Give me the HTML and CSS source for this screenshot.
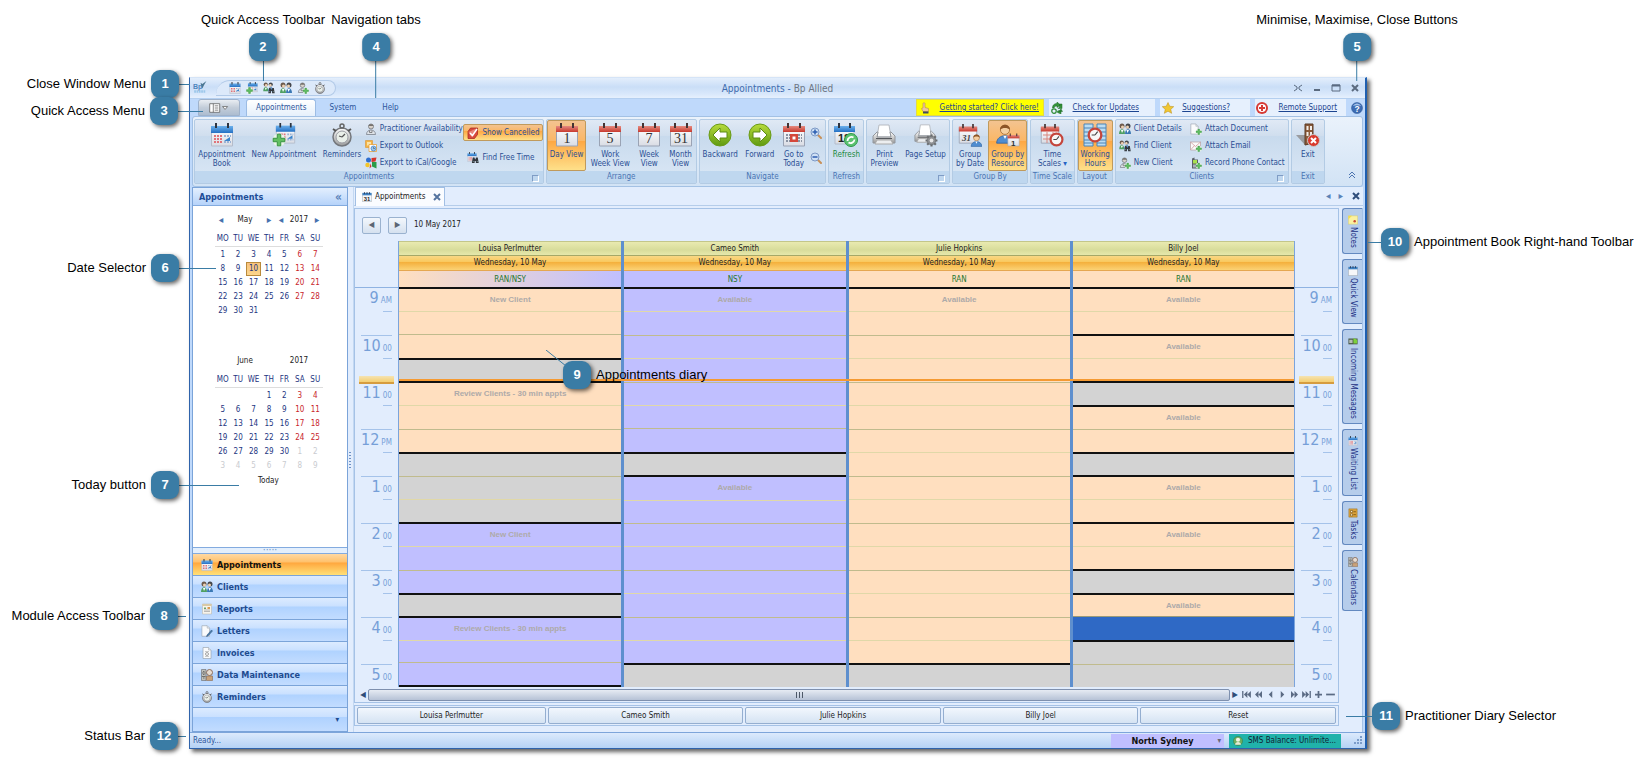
FILE: index.html
```html
<!DOCTYPE html>
<html lang="en">
<head>
<meta charset="utf-8">
<meta name="viewport" content="width=device-width, initial-scale=1.0">
<title>Appointments - Bp Allied</title>
<link rel="stylesheet" href="styles.css">
</head>
<body>

<!-- ICONS -->
<svg class="defs" aria-hidden="true">
<defs>
<linearGradient id="gGreen" x1="0" y1="0" x2="0" y2="1"><stop offset="0" stop-color="#b8dc3c"/><stop offset="1" stop-color="#5f9a10"/></linearGradient>
<linearGradient id="gGrey" x1="0" y1="0" x2="0" y2="1"><stop offset="0" stop-color="#ffffff"/><stop offset="1" stop-color="#9a9a9a"/></linearGradient>
<linearGradient id="gPage" x1="0" y1="0" x2="0" y2="1"><stop offset="0" stop-color="#ffffff"/><stop offset="1" stop-color="#d9dce4"/></linearGradient>
<linearGradient id="gRed" x1="0" y1="0" x2="0" y2="1"><stop offset="0" stop-color="#e58a80"/><stop offset="1" stop-color="#c8392e"/></linearGradient>
<linearGradient id="gBlue" x1="0" y1="0" x2="0" y2="1"><stop offset="0" stop-color="#6db1ec"/><stop offset="1" stop-color="#2470c4"/></linearGradient>
</defs>
<symbol id="plus" viewBox="0 0 24 24"><circle cx="12" cy="12" r="11" fill="#eaf6ea"/><path d="M9 2h6v7h7v6h-7v7H9v-7H2V9h7z" fill="#62c062" stroke="#2d8a3a" stroke-width="1.500"/></symbol>
<symbol id="cal" viewBox="0 0 24 24"><path d="M1.500 4h21v19h-21z" fill="url(#gPage)" stroke="#b4bccb"/><path d="M1 3h22v7H1z" fill="url(#gBlue)"/><path d="M6 0v5M18 0v5" stroke="#2d3440" stroke-width="2"/><path d="M4 13h8M4 16h8M4 19h8" stroke="#e0737a" stroke-width="2" stroke-dasharray="2 1"/><path d="M14 13h7M14 19h7" stroke="#9ab3d5" stroke-width="2" stroke-dasharray="2 1"/><path d="M14 18l6-4v4z" fill="#3a84cc"/></symbol>
<symbol id="calplus" viewBox="0 0 24 24"><use href="#cal" x="3" width="21" height="21"/><use href="#plus" y="10" width="14" height="14"/></symbol>
<symbol id="watch" viewBox="0 0 24 24"><circle cx="12" cy="14" r="9" fill="url(#gGrey)" stroke="#74777c" stroke-width="1.500"/><circle cx="12" cy="14" r="6" fill="#e9efe9" stroke="#9a9da3"/><path d="M12 14l3-3M12 14l-3-1" stroke="#555" stroke-width="1.200"/><circle cx="12" cy="3" r="2" fill="none" stroke="#666" stroke-width="1.500"/><path d="M3 6l3 2M21 6l-3 2" stroke="#555" stroke-width="2"/></symbol>
<symbol id="person" viewBox="0 0 24 24"><circle cx="12" cy="7" r="5" fill="#d8d2cb" stroke="#6b6f76" stroke-width="1.500"/><path d="M7 6c1-5 9-5 10 0" fill="#77736f"/><path d="M3 23c0-12 18-12 18 0z" fill="#dfe3e8" stroke="#747b85" stroke-width="1.500"/><path d="M9 15v4h5v-4" fill="none" stroke="#666" stroke-width="1.500"/></symbol>
<symbol id="outlook" viewBox="0 0 24 24"><path d="M1 1h14v14H1z" fill="#f4b443" stroke="#d8891c"/><path d="M4 4h8v7H4z" fill="#fbe3a5"/><path d="M8 9h15v14H8z" fill="#fff" stroke="#e69b2d" stroke-width="1.500"/><circle cx="17" cy="17" r="5" fill="#9cc6ee" stroke="#3d7fc2" stroke-width="1.500"/><path d="M17 14v3h3" fill="none" stroke="#245"/></symbol>
<symbol id="google" viewBox="0 0 24 24"><circle cx="7" cy="6" r="5" fill="#2e6fd0"/><circle cx="5" cy="16" r="4.500" fill="#f3c52b"/><path d="M13 2l10-1-2 8-8 1z" fill="#d5332b"/><path d="M14 10h9v13l-9-4z" fill="#2a9b48"/><path d="M11 13l-2 10 4-4z" fill="#d5332b"/></symbol>
<symbol id="cancel" viewBox="0 0 24 24"><path d="M7 2h14v13l-6 8H2V9z" fill="#d84a3c" stroke="#a82a20" stroke-width="1.500"/><path d="M3 10l16-7-10 17z" fill="#e9877c"/><path d="M6 12l5 5L20 4" stroke="#fff" stroke-width="3" fill="none"/></symbol>
<symbol id="binoc" viewBox="0 0 24 24"><path d="M4 3h5l2 6h2l2-6h5l3 18h-9v-7h-4v7H1z" fill="#33373d"/><path d="M4 16h3M17 16h3" stroke="#9cc" stroke-width="2"/></symbol>
<symbol id="calfind" viewBox="0 0 24 24"><use href="#cal" width="20" height="20"/><use href="#binoc" x="9" y="9" width="15" height="15"/></symbol>
<symbol id="calred" viewBox="0 0 24 24"><path d="M1.500 4h21v19h-21z" fill="url(#gPage)" stroke="#9aa3b4"/><path d="M1 3h22v6H1z" fill="url(#gRed)"/><path d="M6 0v5M18 0v5" stroke="#433" stroke-width="2"/></symbol>
<symbol id="caldots" viewBox="0 0 24 24"><use href="#calred" width="24" height="24"/><path d="M4 12h16M4 15h16M4 18h16" stroke="#8a93a3" stroke-width="2" stroke-dasharray="2 1"/><path d="M8 11h8v8H8z" fill="#d4473b"/><path d="M10.500 13.500h3v3h-3z" fill="#fff"/></symbol>
<symbol id="back" viewBox="0 0 24 24"><circle cx="12" cy="12" r="11" fill="url(#gGreen)" stroke="#6a9a18"/><path d="M12 5v4h7v6h-7v4l-7-7z" fill="#fff" stroke="#5d8c14"/></symbol>
<symbol id="fwd" viewBox="0 0 24 24"><circle cx="12" cy="12" r="11" fill="url(#gGreen)" stroke="#6a9a18"/><path d="M12 5v4H5v6h7v4l7-7z" fill="#fff" stroke="#5d8c14"/></symbol>
<symbol id="zin" viewBox="0 0 24 24"><path d="M15 15l7 7" stroke="#c89058" stroke-width="4" stroke-linecap="round"/><circle cx="10" cy="10" r="8" fill="#cfe0f4" stroke="#7d99c6" stroke-width="2"/><path d="M10 5v10M5 10h10" stroke="#2c5db0" stroke-width="3"/></symbol>
<symbol id="zout" viewBox="0 0 24 24"><path d="M15 15l7 7" stroke="#c89058" stroke-width="4" stroke-linecap="round"/><circle cx="10" cy="10" r="8" fill="#cfe0f4" stroke="#7d99c6" stroke-width="2"/><path d="M5 10h10" stroke="#2c5db0" stroke-width="3"/></symbol>
<symbol id="refresh" viewBox="0 0 24 24"><path d="M1 4h19v17H1z" fill="url(#gPage)" stroke="#b4bccb"/><path d="M0 3h21v6H0z" fill="url(#gBlue)"/><path d="M5 0v5M16 0v5" stroke="#2d3440" stroke-width="2"/></symbol>
<symbol id="cycle" viewBox="0 0 24 24"><circle cx="17" cy="17" r="6.500" fill="#5cc271" stroke="#2d9a48"/><path d="M13.500 18a4 4 0 0 1 6-3.500M20.500 16.500a4 4 0 0 1-6 3" fill="none" stroke="#fff" stroke-width="1.800"/></symbol>
<symbol id="printer" viewBox="0 0 24 24"><path d="M7 2h10l2 12H5z" fill="#fff" stroke="#b7bbc2"/><path d="M1 13l4-4h1l-1 5h14l-1-5h1l4 4v7H1z" fill="url(#gGrey)" stroke="#92969c"/><path d="M4 15h16v1H4z" fill="#55585d"/><path d="M5 17h14l2 4H3z" fill="#eceef0" stroke="#aaa"/></symbol>
<symbol id="gear" viewBox="0 0 24 24"><path d="M12 1v22M1 12h22M4 4l16 16M20 4L4 20" stroke="#6d6f72" stroke-width="4"/><circle cx="12" cy="12" r="8" fill="#8d8f92" stroke="#5c5e61"/><circle cx="12" cy="12" r="3.500" fill="#e6e6e6"/></symbol>
<symbol id="setup" viewBox="0 0 24 24"><use href="#printer" width="22" height="22"/><use href="#gear" x="11" y="11" width="13" height="13"/></symbol>
<symbol id="man" viewBox="0 0 24 24"><circle cx="12" cy="7" r="5.500" fill="#f4cfa0" stroke="#a36b31"/><path d="M6 7c0-8 12-8 12 0-3-3-9-3-12 0z" fill="#8c5526"/><path d="M2 23c0-12 20-12 20 0z" fill="#4f8dd0" stroke="#2f62a0"/><path d="M10 14l2 4 2-4z" fill="#fff"/></symbol>
<symbol id="clock" viewBox="0 0 24 24"><circle cx="12" cy="12" r="9.500" fill="#f7f7f7" stroke="#c4453c" stroke-width="3.500"/><path d="M12 12l4-5M12 12H7" stroke="#444" stroke-width="1.800"/></symbol>
<symbol id="timescale" viewBox="0 0 24 24"><use href="#calred" width="20" height="22"/><path d="M3 12h14M3 16h14M7 9v11M13 9v11" stroke="#d9877f"/><use href="#clock" x="9" y="9" width="15" height="15"/></symbol>
<symbol id="hours" viewBox="0 0 24 24"><path d="M1 1h9v22H1zM14 1h9v22h-9z" fill="#b9dcf3" stroke="#4d84b6"/><path d="M1 5h9M1 9h9M1 13h9M1 17h9M1 20h9M14 5h9M14 9h9M14 13h9M14 17h9M14 20h9" stroke="#4d84b6"/><use href="#clock" x="4" y="4" width="16" height="16"/></symbol>
<symbol id="people" viewBox="0 0 24 24"><circle cx="6" cy="6" r="5" fill="#6d5a4c"/><circle cx="18" cy="6" r="5" fill="#44464c"/><circle cx="7" cy="8" r="3" fill="#eed2b4"/><circle cx="17" cy="8" r="3" fill="#eed2b4"/><path d="M0 22c0-13 12-13 12 0z" fill="#4f9f63"/><path d="M12 22c0-13 12-13 12 0z" fill="#3a78b4"/><path d="M4 14l2 6 3-6M15 14l2 6 3-6" fill="#fff"/></symbol>
<symbol id="findclient" viewBox="0 0 24 24"><use href="#people" width="21" height="20"/><use href="#binoc" x="10" y="10" width="14" height="14"/></symbol>
<symbol id="newclient" viewBox="0 0 24 24"><use href="#person" width="22" height="22"/><use href="#plus" x="11" y="11" width="13" height="13"/></symbol>
<symbol id="doc" viewBox="0 0 24 24"><path d="M4 1h11l5 5v17H4z" fill="#fafbfc" stroke="#98a1ac" stroke-width="1.300"/><path d="M15 1v5h5" fill="#dfe5ea" stroke="#98a1ac"/></symbol>
<symbol id="docplus" viewBox="0 0 24 24"><use href="#doc" x="-2" width="22" height="24"/><use href="#plus" x="11" y="11" width="13" height="13"/></symbol>
<symbol id="mailplus" viewBox="0 0 24 24"><path d="M1 4h20v16H1z" fill="#fafafa" stroke="#b39a9a" stroke-width="1.300"/><path d="M1 4l10 9 10-9M2 19l7-8M20 19l-7-8" fill="none" stroke="#c98b8b" stroke-width="1.300"/><use href="#plus" x="11" y="11" width="13" height="13"/></symbol>
<symbol id="phoneplus" viewBox="0 0 24 24"><path d="M4 3l5-2v4h7v18H4z" fill="#5a6068"/><path d="M6 6h8v7H6z" fill="#a8e04c"/><path d="M6 15h8v6H6z" fill="#a9b0b8"/><use href="#plus" x="11" y="11" width="13" height="13"/></symbol>
<symbol id="exit" viewBox="0 0 24 24"><path d="M0 12l9 0v10z" fill="#9a9ca0"/><path d="M9 1h8v19l-8 2z" fill="#8a5a3a" stroke="#5b3a24"/><path d="M10.500 3h2v4h-2zM14 3h2v4h-2zM10.500 9h2v4h-2zM14 9h2v4h-2z" fill="#f2ede8"/><circle cx="17.500" cy="17.500" r="6" fill="#d83a2e" stroke="#c9c9c9"/><path d="M15 15l5 5M20 15l-5 5" stroke="#fff" stroke-width="2"/></symbol>
<symbol id="hand" viewBox="0 0 24 24"><path d="M8 3c0-2 4-2 4 0v8l7 2v6H8l-3-6 3-1z" fill="#eec79d" stroke="#a87a4b"/><path d="M8 19h11v4H8z" fill="#3e4a66"/></symbol>
<symbol id="update" viewBox="0 0 24 24"><path d="M3 12C3 5 8 3 12 3l0-3 7 6-7 5V8C9 8 7 9 6 12zM22 4v9l-8 0 3-3V4zM20 14l3 5-7 0zM13 18l7-2v8l-7-3z" fill="#35933b" stroke="#1d6b27"/><circle cx="6" cy="18" r="4.500" fill="none" stroke="#2f8c38" stroke-width="2.500"/></symbol>
<symbol id="star" viewBox="0 0 24 24"><path d="M12 1l3.500 7.500 8 .8-6 5.400 1.800 8L12 18.500l-7.300 4.200 1.800-8-6-5.400 8-.8z" fill="#f1c732" stroke="#b98d17"/></symbol>
<symbol id="buoy" viewBox="0 0 24 24"><circle cx="12" cy="12" r="12" fill="#d63a35"/><circle cx="12" cy="12" r="8" fill="#fff"/><path d="M10 6h4v4h4v4h-4v4h-4v-4H6v-4h4z" fill="#d63a35"/></symbol>
<symbol id="ball" viewBox="0 0 24 24"><circle cx="12" cy="12" r="11" fill="#3d6cb3" stroke="#27508f"/><path d="M4 8c3-7 13-7 16 0-5-2-11-2-16 0z" fill="#a8c5ea"/></symbol>
<symbol id="report" viewBox="0 0 24 24"><path d="M3 2h18v20H3z" fill="#f7f4ec" stroke="#b9b2a2"/><path d="M3 2h18v4H3z" fill="#d9c9a6"/><path d="M6 17h12M6 14h12" stroke="#999" stroke-width="1.300"/><path d="M6 9h4v3H6z" fill="#6aa06a"/><path d="M13 8h5v4h-5z" fill="#dc9a52"/></symbol>
<symbol id="letter" viewBox="0 0 24 24"><use href="#doc" x="-2" width="23" height="24"/><path d="M12 20l9-10 2 2-9 10-3 1z" fill="#4b7ba8" stroke="#2f577e"/></symbol>
<symbol id="invoice" viewBox="0 0 24 24"><use href="#doc" width="24" height="24"/><path d="M8 9h8M8 19h8" stroke="#999"/><circle cx="12" cy="14" r="3" fill="none" stroke="#888" stroke-width="1.500"/></symbol>
<symbol id="maint" viewBox="0 0 24 24"><path d="M1 1h9v22H1z" fill="#c0c0ba" stroke="#555"/><path d="M2 8h7M2 15h7M4 5h3M4 11h3M4 18h3" stroke="#555" stroke-width="1.500"/><path d="M11 14h12v9H11z" fill="#caa27a" stroke="#7d5b3a"/><circle cx="17" cy="7" r="6" fill="#e8ddd2" stroke="#8a6b58" stroke-width="2"/></symbol>
<symbol id="note" viewBox="0 0 24 24"><path d="M1 2h22v20H1z" fill="#fbf1a0" stroke="#d8c660"/><path d="M1 2h9l-9 8z" fill="#f3de4a"/><circle cx="16" cy="15" r="3" fill="#c94a32"/></symbol>
<symbol id="msg" viewBox="0 0 24 24"><path d="M1 6h22v14H1z" fill="#4b5a4b"/><path d="M3 9h8v8H3z" fill="#b5bdb5"/><path d="M13 5l9 4v9h-9z" fill="#7cd03b"/></symbol>
<symbol id="task" viewBox="0 0 24 24"><path d="M2 2h20v20H2z" fill="#d9a23c" stroke="#8f6417"/><path d="M6 6h5v5H6zM6 14h5v5H6z" fill="#f8ecd0" stroke="#7a5310" stroke-width="1.500"/><path d="M13 9h6M13 16h6" stroke="#7a5310" stroke-width="2"/></symbol>
<symbol id="calday" viewBox="0 0 24 24"><path d="M1 4h22v19H1z" fill="#f6f7f9" stroke="#888f9a"/><path d="M1 2h22v6H1z" fill="#3f83c4"/><path d="M6 0v5M12 0v5M18 0v5" stroke="#223" stroke-width="1.500"/></symbol>
<symbol id="sms" viewBox="0 0 24 24"><circle cx="12" cy="12" r="11" fill="#6fae5e" stroke="#2f6e3a"/><circle cx="12" cy="9" r="5" fill="#f4f4e6"/><path d="M5 21c0-9 14-9 14 0z" fill="#e3ead6"/></symbol>
</svg>

<main class="window">

  <header class="titlebar">
    <svg class="logo" viewBox="0 0 24 24"><path d="M13 3l3 2 7-5-4 7-3 6-2-5z" fill="#4b7691"/><text class="bp" x="0" y="13">Bp</text><path d="M2 18h20" stroke="#9cc7ea" stroke-width="4" stroke-dasharray="3 1"/></svg>
    <div class="quickbar">
      <button aria-label="Appointments"><svg><use href="#cal"/></svg></button>
      <button aria-label="New Appointment"><svg><use href="#calplus"/></svg></button>
      <button aria-label="Find Client"><svg><use href="#findclient"/></svg></button>
      <button aria-label="Clients"><svg><use href="#people"/></svg></button>
      <button aria-label="New Client"><svg><use href="#newclient"/></svg></button>
      <button aria-label="Reminders"><svg><use href="#watch"/></svg></button>
    </div>
    <h1>Appointments - <span>Bp Allied</span></h1>
    <div class="winbtns">
      <button aria-label="Full screen"><svg viewBox="0 0 10 10"><path d="M1 2l3 2v2L1 8M9 2L6 4v2l3 2"/></svg></button>
      <button aria-label="Minimise"><svg viewBox="0 0 10 10"><path d="M2 7h6" stroke-width="2"/></svg></button>
      <button aria-label="Maximise"><svg viewBox="0 0 10 10"><path d="M1 2.500h8" stroke-width="2"/><path d="M1 2h8v6H1z"/></svg></button>
      <button aria-label="Close"><svg viewBox="0 0 10 10"><path d="M2 2l6 6M8 2L2 8" stroke-width="2"/></svg></button>
    </div>
  </header>

  <nav class="tabs">
    <button class="appmenu" aria-label="Quick access menu"><svg viewBox="0 0 28 14"><path d="M1 1h14v12H1z" fill="#fff" stroke="#555"/><path d="M6 1v12M8 4h5M8 7h5M8 10h5" stroke="#555"/><path d="M19 5h7l-3.500 4z" fill="#fff" stroke="#555"/></svg></button>
    <button class="tab on">Appointments</button>
    <button class="tab">System</button>
    <button class="tab">Help</button>
    <div class="links">
      <div class="link yellow"><svg><use href="#hand"/></svg><a href="#start">Getting started? Click here!</a></div>
      <div class="link updates"><svg><use href="#update"/></svg><a href="#updates">Check for Updates</a></div>
      <div class="link suggest"><svg><use href="#star"/></svg><a href="#suggest">Suggestions?</a></div>
      <div class="link remote"><svg><use href="#buoy"/></svg><a href="#remote">Remote Support</a></div>
      <button class="helpbtn" aria-label="Help"><svg viewBox="0 0 24 24"><use href="#ball"/><text class="q" x="7" y="19">?</text></svg></button>
    </div>
  </nav>

  <section class="ribbon">
    <div class="group wide">
      <div class="items">
        <button class="big"><svg><use href="#cal"/></svg><span>Appointment<br>Book</span></button>
        <button class="big"><svg><use href="#calplus"/></svg><span>New Appointment</span></button>
        <button class="big"><svg><use href="#watch"/></svg><span>Reminders</span></button>
        <div class="stack">
          <button><svg><use href="#person"/></svg>Practitioner Availability</button>
          <button><svg><use href="#outlook"/></svg>Export to Outlook</button>
          <button><svg><use href="#google"/></svg>Export to iCal/Google</button>
        </div>
        <div class="stack two">
          <button class="hot"><svg><use href="#cancel"/></svg>Show Cancelled</button>
          <button><svg><use href="#calfind"/></svg>Find Free Time</button>
        </div>
      </div>
      <div class="cap more">Appointments</div>
    </div>
    <div class="group">
      <div class="items">
        <button class="big hot"><svg viewBox="0 0 24 24"><use href="#calred"/><text class="day" x="12" y="20">1</text></svg><span>Day View</span></button>
        <button class="big"><svg viewBox="0 0 24 24"><use href="#calred"/><text class="day" x="12" y="20">5</text></svg><span>Work<br>Week View</span></button>
        <button class="big"><svg viewBox="0 0 24 24"><use href="#calred"/><text class="day" x="12" y="20">7</text></svg><span>Week<br>View</span></button>
        <button class="big"><svg viewBox="0 0 24 24"><use href="#calred"/><text class="day" x="12" y="20">31</text></svg><span>Month<br>View</span></button>
      </div>
      <div class="cap">Arrange</div>
    </div>
    <div class="group">
      <div class="items">
        <button class="big"><svg><use href="#back"/></svg><span>Backward</span></button>
        <button class="big"><svg><use href="#fwd"/></svg><span>Forward</span></button>
        <button class="big"><svg><use href="#caldots"/></svg><span>Go to<br>Today</span></button>
        <div class="stack two">
          <button aria-label="Zoom in"><svg><use href="#zin"/></svg></button>
          <button aria-label="Zoom out"><svg><use href="#zout"/></svg></button>
        </div>
      </div>
      <div class="cap">Navigate</div>
    </div>
    <div class="group">
      <div class="items"><button class="big green"><svg viewBox="0 0 24 24"><use href="#refresh"/><text class="n18" x="4" y="19">18</text><use href="#cycle"/></svg><span>Refresh</span></button></div>
      <div class="cap">Refresh</div>
    </div>
    <div class="group">
      <div class="items">
        <button class="big"><svg><use href="#printer"/></svg><span>Print<br>Preview</span></button>
        <button class="big"><svg><use href="#setup"/></svg><span>Page Setup</span></button>
      </div>
      <div class="cap more"></div>
    </div>
    <div class="group">
      <div class="items">
        <button class="big"><svg viewBox="0 0 24 24"><use href="#calred" width="20" height="22"/><text class="n31" x="4" y="18">31</text><use href="#man" x="12" y="11" width="13" height="13"/></svg><span>Group<br>by Date</span></button>
        <button class="big hot"><svg viewBox="0 0 24 24"><use href="#man" x="-1" width="20" height="22"/><use href="#calred" x="11" y="10" width="13" height="14"/><text class="n1" x="15" y="23">1</text></svg><span>Group by<br>Resource</span></button>
      </div>
      <div class="cap">Group By</div>
    </div>
    <div class="group">
      <div class="items"><button class="big"><svg><use href="#timescale"/></svg><span>Time<br>Scales <i>▾</i></span></button></div>
      <div class="cap">Time Scale</div>
    </div>
    <div class="group">
      <div class="items"><button class="big hot"><svg><use href="#hours"/></svg><span>Working<br>Hours</span></button></div>
      <div class="cap">Layout</div>
    </div>
    <div class="group">
      <div class="items lists">
        <div class="stack">
          <button><svg><use href="#people"/></svg>Client Details</button>
          <button><svg><use href="#findclient"/></svg>Find Client</button>
          <button><svg><use href="#newclient"/></svg>New Client</button>
        </div>
        <div class="stack">
          <button><svg><use href="#docplus"/></svg>Attach Document</button>
          <button><svg><use href="#mailplus"/></svg>Attach Email</button>
          <button><svg><use href="#phoneplus"/></svg>Record Phone Contact</button>
        </div>
      </div>
      <div class="cap more">Clients</div>
    </div>
    <div class="group">
      <div class="items"><button class="big"><svg><use href="#exit"/></svg><span>Exit</span></button></div>
      <div class="cap">Exit</div>
    </div>
    <button class="collapse" aria-label="Collapse ribbon"><svg viewBox="0 0 8 8"><path d="M1 4l3-3 3 3M1 7l3-3 3 3"/></svg></button>
  </section>

  <div class="body">
    <aside class="side">
      <div class="sidehead">Appointments <button aria-label="Collapse">«</button></div>
      <div class="dates">
        <div class="month">
          <div class="mhead"><button aria-label="Previous month">◂</button><span>May</span><button aria-label="Next month">▸</button><button aria-label="Previous year">◂</button><span class="yr">2017</span><button aria-label="Next year">▸</button></div>
          <table id="may"></table>
        </div>
        <div class="month">
          <div class="mhead"><i></i><span>June</span><i></i><i></i><span class="yr">2017</span><i></i></div>
          <table id="june"></table>
        </div>
        <button class="today">Today</button>
      </div>
      <div class="grip">·····</div>
      <nav class="modules">
        <button class="on"><svg><use href="#cal"/></svg>Appointments</button>
        <button><svg><use href="#people"/></svg>Clients</button>
        <button><svg><use href="#report"/></svg>Reports</button>
        <button><svg><use href="#letter"/></svg>Letters</button>
        <button><svg><use href="#invoice"/></svg>Invoices</button>
        <button><svg><use href="#maint"/></svg>Data Maintenance</button>
        <button><svg><use href="#watch"/></svg>Reminders</button>
        <div class="overflow">▾</div>
      </nav>
    </aside>

    <div class="split"><svg viewBox="0 0 4 16"><path d="M2 0v16"/></svg></div>

    <section class="main">
      <div class="doctabs">
        <div class="doctab"><svg viewBox="0 0 24 24"><use href="#calday"/><text class="n31d" x="4" y="21">31</text></svg>Appointments<button aria-label="Close tab"><svg viewBox="0 0 10 10"><path d="M2 2l6 6M8 2L2 8"/></svg></button></div>
        <div class="docnav"><button aria-label="Previous tab">◂</button><button aria-label="Next tab">▸</button><button class="x" aria-label="Close"><svg viewBox="0 0 10 10"><path d="M2 2l6 6M8 2L2 8"/></svg></button></div>
      </div>
      <div class="work">
        <div class="left">
          <div class="diary">
            <div class="datebar"><button aria-label="Previous day">◀</button><button aria-label="Next day">▶</button>10 May 2017</div>
            <div class="grid">
              <div class="times"></div>
              <div class="cols" id="cols"></div>
              <div class="times"></div>
            </div>
            <div class="scroll">
              <button aria-label="Scroll left">◀</button>
              <div class="thumb"><svg viewBox="0 0 8 6"><path d="M1.500 0v6M4.500 0v6M7.500 0v6"/></svg></div>
              <button aria-label="Scroll right">▶</button>
              <div class="steps">
                <button aria-label="First"><svg viewBox="0 0 10 8"><path d="M0 0h1.500v8H0zM6 0v8L2 4zM10 0v8L6 4z"/></svg></button>
                <button aria-label="Page back"><svg viewBox="0 0 10 8"><path d="M5 0v8L1 4zM9 0v8L5 4z"/></svg></button>
                <button aria-label="Back"><svg viewBox="0 0 10 8"><path d="M7 0v8L3 4z"/></svg></button>
                <button aria-label="Next"><svg viewBox="0 0 10 8"><path d="M3 0v8l4-4z"/></svg></button>
                <button aria-label="Page next"><svg viewBox="0 0 10 8"><path d="M1 0v8l4-4zM5 0v8l4-4z"/></svg></button>
                <button aria-label="Last"><svg viewBox="0 0 10 8"><path d="M0 0v8l4-4zM4 0v8l4-4zM8.500 0H10v8H8.500z"/></svg></button>
                <button aria-label="Add"><svg viewBox="0 0 10 8"><path d="M4 0h2v3h3v2H6v3H4V5H1V3h3z"/></svg></button>
                <button aria-label="Remove"><svg viewBox="0 0 10 8"><path d="M0 3h10v2H0z"/></svg></button>
              </div>
            </div>
          </div>
          <div class="picker">
            <button>Louisa Perlmutter</button>
            <button>Cameo Smith</button>
            <button>Julie Hopkins</button>
            <button>Billy Joel</button>
            <button>Reset</button>
          </div>
        </div>
        <nav class="sidetabs">
          <button><svg><use href="#note"/></svg>Notes</button>
          <button><svg><use href="#calday"/></svg>Quick View</button>
          <button><svg><use href="#msg"/></svg>Incoming Messages</button>
          <button><svg><use href="#cal"/></svg>Waiting List</button>
          <button><svg><use href="#task"/></svg>Tasks</button>
          <button><svg><use href="#maint"/></svg>Calendars</button>
        </nav>
      </div>
    </section>
  </div>

  <footer class="status">
    <span>Ready...</span>
    <button class="place">North Sydney<i>▾</i></button>
    <div class="smsbox"><svg><use href="#sms"/></svg>SMS Balance: Unlimite...</div>
    <svg class="corner" viewBox="0 0 9 9"><path d="M7 1h2M4 4h2M7 4h2M1 7h2M4 7h2M7 7h2"/></svg>
  </footer>
</main>

<!-- CALLOUTS -->
<div class="call lt n1"><span>Close Window Menu</span><b>1</b><i></i></div>
<div class="call lt n3"><span>Quick Access Menu</span><b>3</b><i></i></div>
<div class="call lt n6"><span>Date Selector</span><b>6</b><i></i></div>
<div class="call lt n7"><span>Today button</span><b>7</b><i></i></div>
<div class="call lt n8"><span>Module Access Toolbar</span><b>8</b><i></i></div>
<div class="call lt n12"><span>Status Bar</span><b>12</b><i></i></div>
<div class="call top n2"><span>Quick Access Toolbar</span><b>2</b><i></i></div>
<div class="call top n4"><span>Navigation tabs</span><b>4</b><i></i></div>
<div class="call top n5"><span>Minimise, Maximise, Close Buttons</span><b>5</b><i></i></div>
<div class="call n9"><svg viewBox="0 0 20 16"><path d="M0 0l20 16"/></svg><b>9</b><span>Appointments diary</span></div>
<div class="call n10"><i></i><b>10</b><span>Appointment Book Right-hand Toolbar</span></div>
<div class="call n11"><i></i><b>11</b><span>Practitioner Diary Selector</span></div>

<script>
/* MONTH TABLES */
function month(id, pad, days, today, extra){
  let cells = [];
  for(let i=0;i<pad;i++) cells.push(["",""]);
  for(let d=1;d<=days;d++) cells.push([d, d===today ? "now" : ""]);
  for(let d=1;d<=extra;d++) cells.push([d,"out"]);
  let html = "<thead><tr><th>MO<th>TU<th>WE<th>TH<th>FR<th>SA<th>SU</tr></thead><tbody>";
  for(let i=0;i<cells.length;i+=7){
    html += "<tr>" + cells.slice(i,i+7).map(c=>`<td class="${c[1]}">${c[0]}</td>`).join("") + "</tr>";
  }
  document.getElementById(id).innerHTML = html + "</tbody>";
}
month("may", 0, 31, 10, 0);
month("june", 3, 30, 0, 9);

/* TIME RULERS */
let hours = [["9","AM"],["10","00"],["11","00"],["12","PM"],["1","00"],["2","00"],["3","00"],["4","00"],["5","00"]];
document.querySelectorAll(".times").forEach(t=>{
  t.innerHTML = hours.map((h,i)=>
    `<div class="hour"><b>${h[0]}</b><small>${h[1]}</small></div>` + (i<8 ? `<div class="half"></div>` : "")
  ).join("") + `<div class="marker"></div>`;
});

/* DIARY COLUMNS: [half hours, colour, text] */
let diary = [
  {name:"Louisa Perlmutter", loc:"RAN/NSY", cls:"mixed", slots:[[3,"peach","New Client"],[1,"grey",""],[3,"peach","Review Clients - 30 min appts"],[3,"grey",""],[3,"lilac","New Client"],[1,"grey",""],[3,"lilac end","Review Clients - 30 min appts"]]},
  {name:"Cameo Smith", loc:"NSY", cls:"lilac", slots:[[7,"lilac","Available"],[1,"grey",""],[8,"lilac","Available"],[1,"grey",""]]},
  {name:"Julie Hopkins", loc:"RAN", cls:"peach", slots:[[16,"peach","Available"],[1,"grey",""]]},
  {name:"Billy Joel", loc:"RAN", cls:"peach", slots:[[2,"peach","Available"],[2,"peach","Available"],[1,"grey",""],[2,"peach","Available"],[1,"grey",""],[2,"peach","Available"],[2,"peach","Available"],[1,"grey",""],[1,"peach","Available"],[1,"picked",""],[2,"grey",""]]}
];
document.getElementById("cols").innerHTML = diary.map(d=>{
  let at = 0;
  let slots = d.slots.map(s=>{
    let cells = "";
    for(let i=0;i<s[0];i++){
      cells += `<div class="${at%2 ? "" : "full"}">${i ? "" : s[2]}</div>`;
      at++;
    }
    return `<div class="slot ${s[1]}" style="grid-row:span ${s[0]}">${cells}</div>`;
  }).join("");
  return `<div class="col"><div class="who">${d.name}</div><div class="date">Wednesday, 10 May</div><div class="loc ${d.cls}">${d.loc}</div><div class="slots">${slots}</div></div>`;
}).join("") + `<div class="nowline"></div>`;
</script>

</body>
</html>
```
FILE: styles.css
```css
*{box-sizing:border-box;}

body{
  margin:0;
  height:100vh;
  padding:77px 281px 12px 189px;
  display:flex;
  position:relative;
  background:white;
  color:#222;
  font-family:"DejaVu Sans Condensed","DejaVu Sans",sans-serif;
  font-size:8px;
  line-height:10px;
}

button{
  margin:0;
  padding:0;
  border:none;
  background:none;
  font:inherit;
  color:inherit;
  cursor:pointer;
}
svg{display:block;width:10px;height:10px;flex:none;}
.defs{position:absolute;width:0;height:0;}

/* lettering inside icons */
.bp{font:bold 12px "Liberation Sans",sans-serif;fill:#4e86bd;}
.q{font:bold 17px "Liberation Sans",sans-serif;fill:#fff;}
.day{font:14px "Liberation Serif",serif;fill:#333;text-anchor:middle;}
.n18{font:bold 11px "Liberation Sans",sans-serif;fill:#222;}
.n31{font:italic bold 9px "Liberation Serif",serif;fill:#444;}
.n31d{font:bold 14px "Liberation Sans",sans-serif;fill:#222;}
.n1{font:bold 8px "Liberation Sans",sans-serif;fill:#333;}

.window{
  flex:1;
  min-width:0;
  display:flex;
  flex-direction:column;
  background:#bfd9fb;
  border:1px solid #2f63ab;
  border-top-color:#d5e4f7;
  border-right:2px solid #1f5fb0;
  box-shadow:3px 3px 4px #666;
}

/* TITLE */
.titlebar{
  height:21px;
  position:relative;
  display:flex;
  align-items:center;
  background:linear-gradient(#e3eefc,#cadef7 45%,#d9e8fb 80%,#e6f0fd);
  border-bottom:1px solid #b4cff0;
}
.logo{width:14px;height:14px;margin-left:3px;}
.quickbar{
  display:flex;
  gap:5px;
  margin-left:9px;
  height:16px;
  padding:0 9px 0 13px;
  align-items:center;
  border:1px solid #b2cae8;
  border-left:none;
  border-radius:16px 9px 9px 0;
  background:#dce9fa;
}
.quickbar svg{width:12px;height:12px;}
.titlebar h1{
  position:absolute;
  left:0;
  right:0;
  margin:0;
  text-align:center;
  font-size:10px;
  font-weight:normal;
  line-height:19px;
  color:#3f6cae;
  pointer-events:none;
}
.titlebar h1 span{color:#6d7683;}
.winbtns{margin-left:auto;display:flex;gap:9px;padding-right:5px;}
.winbtns svg{fill:none;stroke:#5b6b80;}

/* TABS */
.tabs{
  height:17px;
  display:flex;
  align-items:stretch;
  padding:0 2px 0 8px;
  color:#2b559b;
}
.appmenu{
  width:42px;
  margin-right:6px;
  border:1px solid #9fb2cb;
  border-radius:3px 3px 0 0;
  background:linear-gradient(#e9edf2,#c3cdd9 50%,#adbdd0);
}
.appmenu svg{width:20px;height:10px;margin:0 auto;}
.tab{padding:0 13px;}
.tab.on{
  background:linear-gradient(#fff,#e6f0fb);
  border:1px solid #9cbce4;
  border-bottom:none;
  border-radius:3px 3px 0 0;
  padding:0 9px;
}
.links{margin-left:auto;display:flex;gap:5px;align-items:stretch;}
.link{display:flex;align-items:center;background:#e6f0fd;padding:0 8px 0 6px;justify-content:space-between;}
.link svg{width:12px;height:12px;}
.link a{color:#1c4590;text-decoration:underline;}
.yellow{background:#ffff00;border:1px solid #e6dc40;width:128px;padding:0 4px 0 2px;}
.updates{width:106px;padding-right:16px;padding-left:2px;}
.suggest{width:90px;padding-right:20px;padding-left:2px;}
.remote{width:91px;padding-left:1px;padding-right:9px;}
.helpbtn svg{width:12px;height:12px;}

/* RIBBON */
.ribbon{
  margin:0 2px;
  height:71px;
  display:grid;
  grid-template-columns:348fr 150fr 127fr 36fr 83fr 76fr 44fr 36fr 173fr 34fr 34fr;
  gap:2px;
  padding:2px 1px;
  background:linear-gradient(#eaf2fb,#d2e3f5);
  border:1px solid #a3c1e4;
  border-radius:3px;
  color:#2b4f94;
}
.group{
  min-width:0;
  display:flex;
  flex-direction:column;
  border:1px solid #b3cbe4;
  border-radius:2px;
  background:linear-gradient(#e0e9f5,#d0deee 25%,#c8daed 26%,#dbe8f6);
}
.items{flex:1;display:flex;justify-content:space-between;min-width:0;min-height:0;}
.wide .items{justify-content:space-around;}
.lists{padding:0 3px;}
.cap{
  position:relative;
  height:12px;
  background:#bfd7ef;
  color:#4a74b3;
  text-align:center;
  line-height:12px;
}
.more::after{
  content:"";
  position:absolute;
  right:4px;
  top:4px;
  width:5px;
  height:5px;
  border:1px solid #7f9cc5;
  border-right-color:#fff;
  border-bottom-color:#fff;
}
.big{
  display:flex;
  flex-direction:column;
  align-items:center;
  gap:3px;
  line-height:9px;
  padding:2px 2px 0;
  white-space:nowrap;
  border:1px solid transparent;
}
.big:only-child{margin:0 auto;}
.big svg{width:24px;height:24px;}
.big i{font-style:normal;color:#2563c4;}
.big.green{color:#1b8a3c;}
.hot{
  border:1px solid #c09a5c;
  border-radius:2px;
  background:linear-gradient(#f3c390,#fbb766 40%,#fda743 41%,#fee08a);
}
.stack{display:flex;flex-direction:column;justify-content:space-between;}
.stack button{display:flex;align-items:center;gap:3px;height:17px;white-space:nowrap;}
.stack svg{width:12px;height:12px;}
.stack.two{justify-content:space-around;}
.stack .hot{padding:0 2px 0 3px;}
.stack.two button + button{padding-left:4px;}
.stack.two button[aria-label]{padding:0 3px 0 0;}
.collapse{align-self:end;justify-self:end;padding:3px 5px 5px;}
.collapse svg{width:8px;height:8px;fill:none;stroke:#4c74b0;}

/* BODY */
.body{
  flex:1;
  min-height:0;
  display:flex;
  background:#e2edfd;
  margin:0 2px;
}
.side{
  width:156px;
  display:flex;
  flex-direction:column;
  background:white;
  border:1px solid #7ba4d9;
}
.sidehead{
  height:18px;
  display:flex;
  align-items:center;
  justify-content:space-between;
  padding:0 5px 0 6px;
  font-size:9px;
  font-weight:bold;
  color:#1d4d97;
  background:linear-gradient(#e3effe,#b6d3fa);
  border-bottom:1px solid #83abdf;
}
.sidehead button{font-size:12px;color:#5c83b9;}
.dates{flex:1;min-height:0;padding-left:22px;}
.month{height:141px;padding-top:7px;width:108px;}
.month + .month{height:129px;}
.mhead{display:grid;grid-template-columns:12px 1fr 12px 12px 24px 12px;height:14px;align-items:center;text-align:center;}
.mhead button{color:#4672ae;font-size:10px;}
.month table{
  width:100%;
  table-layout:fixed;
  border-collapse:collapse;
  margin-top:6px;
  color:#24357f;
}
.month th{font-weight:normal;padding:0;height:13px;border-bottom:1px solid #ddd;}
.month td{padding:0;height:14px;text-align:center;}
.month tbody tr:first-child td{height:16px;padding-top:2px;}
.month td:nth-child(n+6){color:#c8252c;}
.month td.out{color:#c9cbd0;}
.month td.now{
  background:linear-gradient(#f7c27c,#fbd68e);
  outline:1px solid #b98a3c;
  outline-offset:-1px;
}
.today{display:block;margin-left:43px;color:#222;}
.grip{height:7px;line-height:4px;text-align:center;font-size:10px;color:#6c90c4;background:#e3effd;border-top:1px solid #83abdf;border-bottom:1px solid #83abdf;}
.modules{display:flex;flex-direction:column;}
.modules button,.overflow{
  height:22px;
  display:flex;
  align-items:center;
  gap:4px;
  padding-left:8px;
  font-size:9px;
  font-weight:bold;
  color:#1e4b8f;
  background:linear-gradient(#dcebff,#c9e0ff 40%,#afd2ff 41%,#c2dcff);
  border-bottom:1px solid #7ba4d9;
}
.modules svg{width:12px;height:12px;}
.modules .on{color:#111;background:linear-gradient(#ffd9a3,#ffc069 40%,#ffa63d 41%,#ffe078);}
.overflow{height:23px;border:none;justify-content:flex-end;padding-right:8px;font-size:8px;}
.split{width:6px;display:flex;align-items:center;border-right:1px solid #c3d8f2;}
.split svg{width:4px;height:16px;stroke:#6c90c4;stroke-width:2;stroke-dasharray:1 2;}

.main{flex:1;min-width:0;display:flex;flex-direction:column;}
.doctabs{height:19px;display:flex;border-bottom:1px solid #b5cdea;}
.doctab{
  display:flex;
  align-items:center;
  gap:3px;
  margin-left:1px;
  margin-bottom:-1px;
  padding:0 2px 0 6px;
  background:#fafcff;
  border:1px solid #a2bfe4;
  border-bottom:none;
}
.doctab button{margin-left:4px;}
.doctab button svg,.docnav svg{fill:none;stroke:#55749f;stroke-width:2;}
.docnav{margin-left:auto;display:flex;gap:8px;align-items:center;padding-right:2px;color:#5b82b8;font-size:10px;}
.docnav .x svg{stroke:#2f4d7a;}
.work{flex:1;min-height:0;display:flex;padding-top:2px;gap:3px;}
.left{flex:1;min-width:0;display:flex;flex-direction:column;gap:2px;margin-bottom:6px;}
.diary{
  flex:1;
  min-height:0;
  display:flex;
  flex-direction:column;
  border:1px solid #a5c2e6;
}
.datebar{display:flex;align-items:center;gap:7px;height:32px;padding-left:7px;flex:none;}
.datebar button{
  width:19px;
  height:17px;
  border:1px solid #9ab2cf;
  border-radius:2px;
  background:linear-gradient(#f3f7fc,#d5e1ef);
  color:#5c6673;
}
.grid{flex:1;min-height:0;display:flex;}
.times{
  position:relative;
  width:43px;
  margin-top:46px;
  display:grid;
  grid-template-rows:repeat(17,minmax(0,1fr));
  border-top:1px solid #8fb3e2;
  color:#769fd8;
  padding:0 7px 0 6px;
}
.hour{border-top:1px solid #a5c3ea;text-align:right;white-space:nowrap;}
.hour:first-child{border:none;}
.hour b{font-size:16px;font-weight:normal;line-height:20px;}
.hour small{font-size:8px;margin-left:2px;}
.half{border-top:1px solid #a5c3ea;width:9px;justify-self:end;}
.marker{
  position:absolute;
  left:4px;
  right:4px;
  top:22%;
  height:8px;
  background:linear-gradient(#f5e3b2,#f5cf71);
  border-bottom:2px solid #d69c3f;
}
.cols{
  flex:1;
  min-width:0;
  position:relative;
  display:grid;
  grid-template-columns:223fr 225fr 225fr 225fr;
  border-left:1px solid #7ba4dc;
  border-right:1px solid #7ba4dc;
}
.col{display:flex;flex-direction:column;text-align:center;min-width:0;border-left:3px solid #5e8fce;}
.col:first-child{border-left:none;}
.who{height:15px;line-height:14px;background:linear-gradient(#e9eab0,#d8dc9b 60%,#e6e8ab);border-top:1px solid #c3c68a;border-bottom:1px solid #a5a868;}
.date{height:15px;line-height:14px;background:linear-gradient(#f9d885,#f9c95f 40%,#f4b03c 45%,#fbd275);border-bottom:1px solid #e5a751;}
.loc{height:16px;line-height:17px;color:#25762f;}
.peach{background:#ffdfbf;}
.lilac{background:#c0bfff;}
.grey{background:#d3d3d3;}
.mixed{background:linear-gradient(90deg,#ffdfbf,#c0bfff);}
.picked{background:#2f69c5;}
.slots{flex:1;min-height:0;display:grid;grid-template-rows:repeat(17,minmax(0,1fr));}
.slot{display:flex;flex-direction:column;position:relative;min-height:0;border-top:2px solid #111;}
.slot.picked{border-top:1px solid #9a9a78;}
.slot.end{border-bottom:2px solid #111;}
.slot div{
  flex:1;
  min-height:0;
  border-top:1px solid #e0d8a8;
  padding-top:6px;
  font:bold 8px/10px "Liberation Sans",Arial,sans-serif;
  color:#aeaaa9;
}
.slot div.full{border-top-color:#c0bb8d;}
.slot div:first-child{border-top:none;}
.nowline{position:absolute;left:0;right:0;top:138px;height:2px;background:#f59a32;}
.scroll{height:15px;flex:none;display:flex;align-items:center;padding:1px 3px;}
.scroll > button{width:10px;color:#2f4d7a;}
.thumb{
  flex:1;
  height:12px;
  display:flex;
  align-items:center;
  justify-content:center;
  border:1px solid #7e90ae;
  border-radius:2px;
  background:linear-gradient(#e6ebf3,#b6c2d6);
}
.thumb svg{width:8px;height:6px;stroke:#4d5868;}
.steps{display:flex;gap:3px;padding-left:2px;}
.steps svg{width:9px;height:7px;fill:#5b6b84;}
.picker{
  display:grid;
  grid-template-columns:190fr 197fr 197fr 197fr 197fr;
  gap:2px;
  padding:1px 2px;
  border:1px solid #a5c2e6;
}
.picker button{
  height:17px;
  border:1px solid #94aed0;
  border-radius:2px;
  background:linear-gradient(#f2f7fd,#d5e3f3);
}
.sidetabs{display:flex;flex-direction:column;align-items:flex-start;gap:5px;width:21px;border-right:1px solid #a5c2e6;}
.sidetabs button{
  writing-mode:vertical-rl;
  width:20px;
  display:flex;
  align-items:center;
  gap:2px;
  padding:6px 0 5px;
  border:1px solid #6389c0;
  border-right:none;
  border-radius:3px 0 0 3px;
  background:#b6cdeb;
  color:#1b2f83;
}

/* STATUS */
.status{
  height:16px;
  flex:none;
  display:flex;
  align-items:center;
  gap:5px;
  padding:0 3px;
  color:#2b559b;
  background:linear-gradient(#dceafc,#b5d2f5);
  border-top:1px solid #7da5da;
}
.place{
  margin-left:auto;
  position:relative;
  width:113px;
  height:14px;
  padding-right:10px;
  background:#c0bfff;
  color:#111;
  font-weight:bold;
  font-size:9px;
}
.place i{position:absolute;right:3px;font-style:normal;font-size:8px;color:#667;}
.smsbox{display:flex;align-items:center;gap:5px;width:112px;height:14px;padding-left:4px;background:#20b2aa;color:#123;white-space:nowrap;}
.corner{width:9px;height:9px;margin-left:7px;stroke:#7b9cc9;stroke-width:2;}

/* CALLOUTS */
.call{
  position:absolute;
  display:flex;
  align-items:center;
  font:13px/16px "Liberation Sans",Arial,sans-serif;
  color:#000;
  white-space:nowrap;
}
.call b{
  flex:none;
  width:28px;
  height:28px;
  border-radius:9px;
  background:#3a7ca5;
  box-shadow:2px 2px 4px rgba(0,0,0,.6);
  color:white;
  text-align:center;
  line-height:28px;
  z-index:1;
}
.call i{height:1px;background:#3a7ca5;width:8px;}
.call span{margin:0 5px;}
.lt{left:0;justify-content:flex-end;width:186px;}
.n1{top:70px;width:190px;}
.n1 i{width:11px;}
.n3{top:97px;width:203px;}
.n3 i{width:25px;}
.n6{top:254px;width:216px;}
.n6 i{width:37px;}
.n7{top:471px;width:239px;}
.n7 i{width:60px;}
.n8{top:602px;}
.n12{top:722px;}
.top{flex-direction:column;top:12px;transform:translateX(-50%);}
.top span{margin-bottom:5px;}
.top i{width:1px;height:20px;}
.n2{left:263px;}
.n4{left:376px;}
.top.n4 i{height:37px;}
.n5{left:calc(100% - 291px);}
.n9{left:546px;top:361px;}
.n9 svg{align-self:flex-start;width:20px;height:16px;margin:-11px -3px 0 0;stroke:#3a7ca5;}
.n10{left:calc(100% - 280px);top:228px;}
.n10 i{width:13px;}
.n11{left:calc(100% - 302px);top:702px;}
.n11 i{width:26px;}
```
